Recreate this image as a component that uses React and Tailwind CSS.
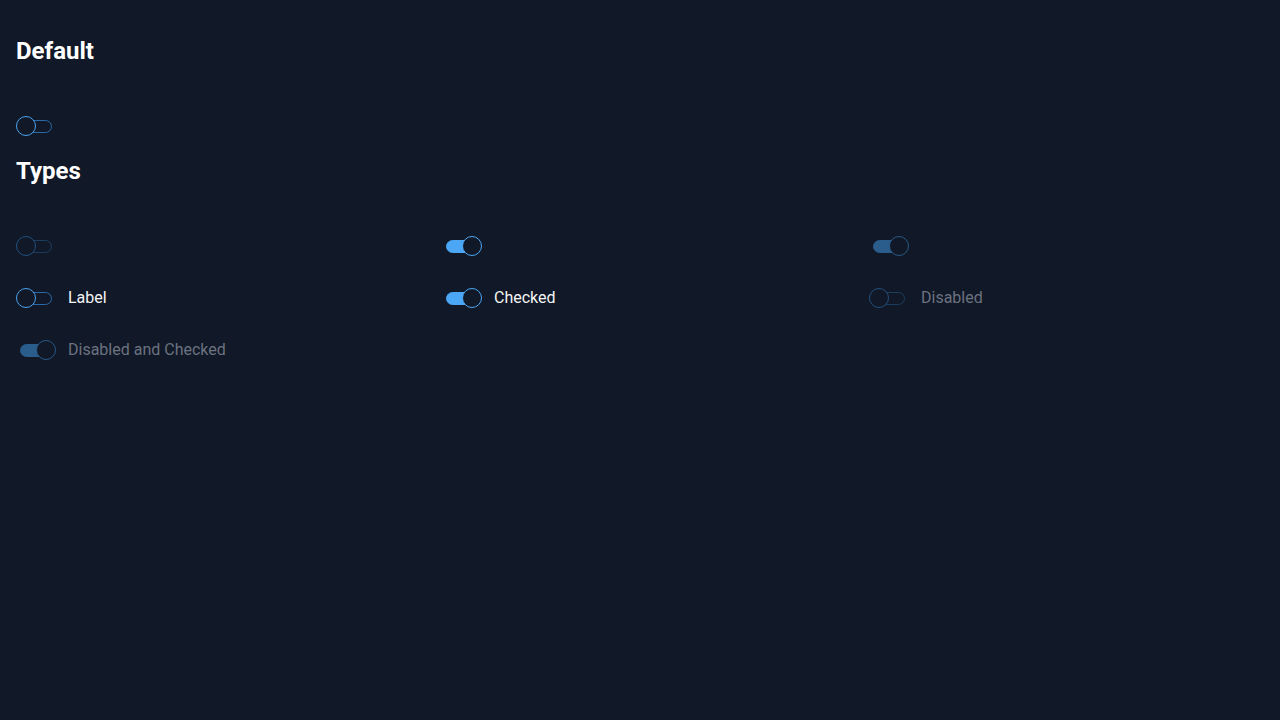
import React from "react";

function Switch({ checked = false, disabled = false }) {
  const trackCls = checked
    ? disabled
      ? "left-[4px] bg-[#2a5d8c] border-[#2a5d8c]"
      : "left-[4px] bg-[#4ba6f5] border-[#4ba6f5]"
    : disabled
    ? "left-[6px] bg-transparent border-[#1d3d5e]"
    : "left-[6px] bg-transparent border-[#2b6aa6]";
  const thumbCls = checked
    ? disabled
      ? "right-0 border-[#2a5a86]"
      : "right-0 border-[#4ea8f5]"
    : disabled
    ? "left-0 border-[#22507c]"
    : "left-0 border-[#4aa3ef]";
  return (
    <div className="relative w-10 h-5 shrink-0">
      <div className={`absolute top-[4px] h-[13px] w-[30px] rounded-full border ${trackCls}`} />
      <div className={`absolute top-0 w-5 h-5 rounded-full border bg-[#111827] ${thumbCls}`} />
    </div>
  );
}

function Item({ checked, disabled, label }) {
  return (
    <div className="flex items-center gap-3 h-5">
      <Switch checked={checked} disabled={disabled} />
      {label && (
        <span className={`text-base ${disabled ? "text-[#6b7280]" : "text-[#f3f4f6]"}`}>{label}</span>
      )}
    </div>
  );
}

export default function App() {
  return (
    <div
      className="min-h-screen w-full bg-[#111827] text-white"
      style={{ fontFamily: "Roboto, 'Liberation Sans', sans-serif" }}
    >
      <div className="pl-4 pt-[35px]">
        <h2 className="text-2xl font-bold leading-8 text-white">Default</h2>
        <div className="mt-[49px]">
          <Item disabled={false} />
        </div>
        <h2 className="mt-[19px] text-2xl font-bold leading-8 text-white">Types</h2>
        <div className="mt-[49px] grid grid-cols-[426px_427px_1fr] gap-y-8">
          <Item disabled />
          <Item checked />
          <Item checked disabled />
          <Item label="Label" />
          <Item checked label="Checked" />
          <Item disabled label="Disabled" />
          <Item checked disabled label="Disabled and Checked" />
        </div>
      </div>
    </div>
  );
}
